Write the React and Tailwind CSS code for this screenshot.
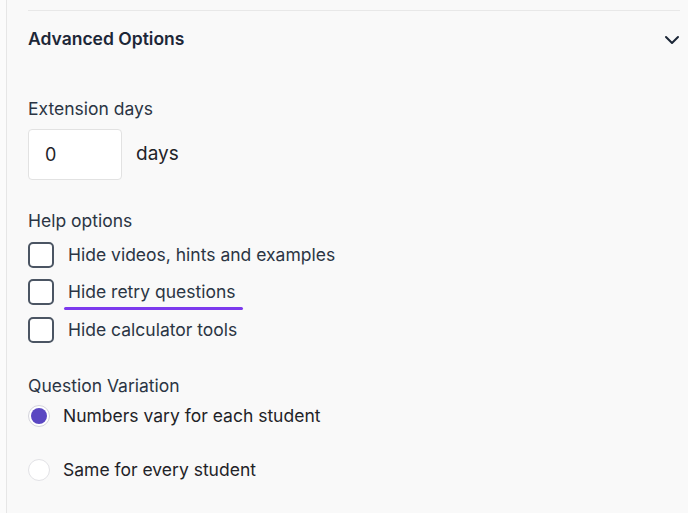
import { ChevronDown } from 'lucide-react'

function Checkbox({ label, underline }) {
  return (
    <label className="flex items-center h-[37.5px]">
      <span className="w-[26px] h-[26px] rounded-[5px] border-2 border-[#4b5563] bg-white shrink-0"></span>
      <span className="relative ml-[14px] text-[17.5px] text-[#2b3544]">
        {label}
        {underline && (
          <span className="absolute left-[-4px] right-[-8px] bottom-[-5px] h-[3px] rounded-full bg-[#7c3aed]"></span>
        )}
      </span>
    </label>
  )
}

function Radio({ label, checked }) {
  return (
    <label className="flex items-center">
      {checked ? (
        <span className="w-[22px] h-[22px] rounded-full border border-[#d4d4dc] bg-white flex items-center justify-center shrink-0">
          <span className="w-[16px] h-[16px] rounded-full bg-[#5a47c2]"></span>
        </span>
      ) : (
        <span className="w-[22px] h-[22px] rounded-full border border-[#e2e2e6] bg-white shrink-0"></span>
      )}
      <span className="ml-[13px] text-[17.5px] text-[#1f2328]">{label}</span>
    </label>
  )
}

export default function App() {
  return (
    <div className="min-h-screen bg-[#fbfbfb] font-['Inter',sans-serif]">
      <div className="ml-[6px] min-h-[513px] border-l border-[#e6e6e6] bg-[#f9f9f9] pl-[21px] pr-[4px] pt-[10px]">
        <div className="border-t border-[#e8e8e8] mr-[4px]"></div>

        {/* Header */}
        <div className="flex items-center justify-between h-[57px]">
          <h2 className="text-[17.5px] font-semibold text-[#1c2737]">Advanced Options</h2>
          <ChevronDown className="w-[24px] h-[24px] text-[#1c2737]" strokeWidth={2} />
        </div>

        {/* Extension days */}
        <div className="mt-[30px]">
          <div className="text-[17.5px] text-[#2b3544] leading-[22px]">Extension days</div>
          <div className="flex items-center mt-[9px]">
            <div className="w-[94px] h-[51px] rounded-[4px] border border-[#e2e2e2] bg-white flex items-center pl-[16px] text-[18px] text-[#1f2328]">
              0
            </div>
            <span className="ml-[14px] text-[19px] text-[#1f2328]">days</span>
          </div>
        </div>

        {/* Help options */}
        <div className="mt-[30px]">
          <div className="text-[17.5px] text-[#2b3544] leading-[22px]">Help options</div>
          <div className="mt-[4px] flex flex-col">
            <Checkbox label="Hide videos, hints and examples" />
            <Checkbox label="Hide retry questions" underline />
            <Checkbox label="Hide calculator tools" />
          </div>
        </div>

        {/* Question Variation */}
        <div className="mt-[26px]">
          <div className="text-[17.5px] text-[#2b3544] leading-[22px]">Question Variation</div>
          <div className="mt-[6px] flex flex-col gap-[28px]">
            <Radio label="Numbers vary for each student" checked />
            <Radio label="Same for every student" />
          </div>
        </div>
      </div>
    </div>
  )
}
